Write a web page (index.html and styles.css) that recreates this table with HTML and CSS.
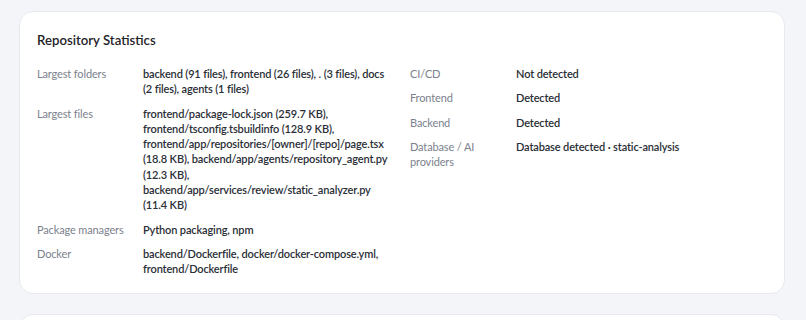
FILE: index.html
```html
<!DOCTYPE html>
<html lang="en">
<head>
<meta charset="utf-8">
<title>Repository Statistics</title>
<link rel="stylesheet" href="styles.css">
</head>
<body>
<main class="page">
  <section class="card">
    <h2 class="card-title">Repository Statistics</h2>
    <div class="stats">
      <dl class="stat-col">
        <div class="stat-row">
          <dt>Largest folders</dt>
          <dd>backend (91 files), frontend (26 files), . (3 files), docs (2 files), agents (1 files)</dd>
        </div>
        <div class="stat-row">
          <dt>Largest files</dt>
          <dd>frontend/package-lock.json (259.7 KB), frontend/tsconfig.tsbuildinfo (128.9 KB), frontend/app/repositories/[owner]/[repo]/page.tsx (18.8 KB), backend/app/agents/repository_agent.py (12.3 KB), backend/app/services/review/static_analyzer.py (11.4 KB)</dd>
        </div>
        <div class="stat-row">
          <dt>Package managers</dt>
          <dd>Python packaging, npm</dd>
        </div>
        <div class="stat-row">
          <dt>Docker</dt>
          <dd>backend/Dockerfile, docker/docker-compose.yml, frontend/Dockerfile</dd>
        </div>
      </dl>
      <dl class="stat-col">
        <div class="stat-row">
          <dt>CI/CD</dt>
          <dd>Not detected</dd>
        </div>
        <div class="stat-row">
          <dt>Frontend</dt>
          <dd>Detected</dd>
        </div>
        <div class="stat-row">
          <dt>Backend</dt>
          <dd>Detected</dd>
        </div>
        <div class="stat-row">
          <dt>Database / AI providers</dt>
          <dd>Database detected · static-analysis</dd>
        </div>
      </dl>
    </div>
  </section>
  <section class="card card-next"></section>
</main>
</body>
</html>
```
FILE: styles.css
```css
* { box-sizing: border-box; }
html, body { margin: 0; padding: 0; }
body {
  background: #f4f5f9;
  font-family: Lato, "Noto Sans", "Liberation Sans", sans-serif;
  color: #2a2e36;
}
.page {
  padding: 11px 21px 0 19px;
  display: flex;
  flex-direction: column;
  gap: 20px;
}
.card {
  background: #fff;
  border: 1px solid #e7e9ef;
  border-radius: 14px;
  padding: 18px 17px 16px;
}
.card-next { height: 40px; }
.card-title {
  margin: 0 0 16px;
  font-size: 13.2px;
  line-height: 20px;
  font-weight: 600;
  color: #1f2329;
}
.stats {
  display: grid;
  grid-template-columns: 1fr 1fr;
  column-gap: 16px;
}
.stat-col {
  margin: 0;
  display: flex;
  flex-direction: column;
  gap: 9px;
}
.stat-row {
  display: grid;
  grid-template-columns: 96px 1fr;
  column-gap: 10px;
  font-size: 11px;
  line-height: 15.3px;
  letter-spacing: -0.14px;
}
.stat-row dt {
  color: #7b818d;
}
.stat-row dd {
  margin: 0;
  font-weight: 600;
  color: #2a2e36;
}
```
